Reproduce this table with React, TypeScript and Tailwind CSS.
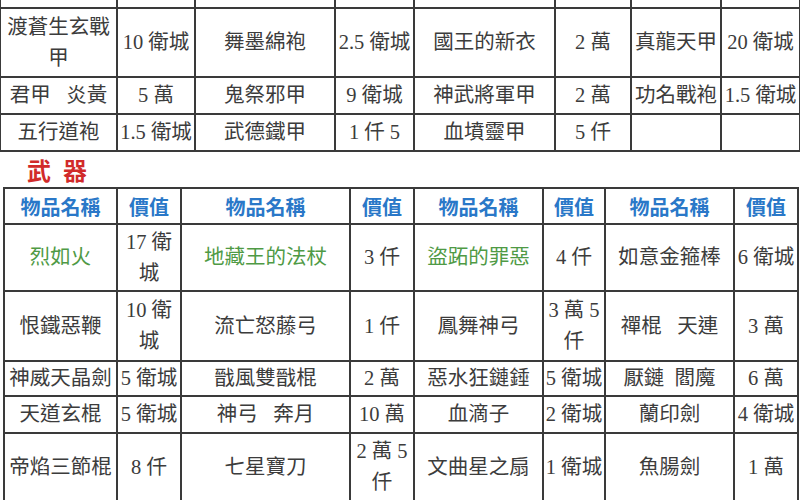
import React from "react";

type Cell = { t: string; g?: boolean };

const armor: string[][] = [
  ["渡蒼生玄戰甲", "10 衛城", "舞墨綿袍", "2.5 衛城", "國王的新衣", "2 萬", "真龍天甲", "20 衛城"],
  ["君甲\u00a0\u00a0\u00a0炎黃", "5 萬", "鬼祭邪甲", "9 衛城", "神武將軍甲", "2 萬", "功名戰袍", "1.5 衛城"],
  ["五行道袍", "1.5 衛城", "武德鐵甲", "1 仟 5", "血墳靈甲", "5 仟", "", ""],
];
const armorH = ["h-[69px]", "h-[37px]", "h-[37px]"];

const weapons: Cell[][] = [
  [{ t: "烈如火", g: true }, { t: "17 衛城" }, { t: "地藏王的法杖", g: true }, { t: "3 仟" }, { t: "盜跖的罪惡", g: true }, { t: "4 仟" }, { t: "如意金箍棒" }, { t: "6 衛城" }],
  [{ t: "恨鐵惡鞭" }, { t: "10 衛城" }, { t: "流亡怒藤弓" }, { t: "1 仟" }, { t: "鳳舞神弓" }, { t: "3 萬 5 仟" }, { t: "禪棍\u00a0\u00a0\u00a0天連" }, { t: "3 萬" }],
  [{ t: "神威天晶劍" }, { t: "5 衛城" }, { t: "戩風雙戩棍" }, { t: "2 萬" }, { t: "惡水狂鏈錘" }, { t: "5 衛城" }, { t: "厭鏈\u00a0\u00a0閻魔" }, { t: "6 萬" }],
  [{ t: "天道玄棍" }, { t: "5 衛城" }, { t: "神弓\u00a0\u00a0\u00a0奔月" }, { t: "10 萬" }, { t: "血滴子" }, { t: "2 衛城" }, { t: "蘭印劍" }, { t: "4 衛城" }],
  [{ t: "帝焰三節棍" }, { t: "8 仟" }, { t: "七星寶刀" }, { t: "2 萬 5 仟" }, { t: "文曲星之扇" }, { t: "1 衛城" }, { t: "魚腸劍" }, { t: "1 萬" }],
];
const weaponH = ["h-[67px]", "h-[70px]", "h-[35px]", "h-[37px]", "h-[68px]"];

const topCols = [117, 78, 140, 79, 141, 76, 90, 79];
const botCols = [113, 64, 169, 64, 129, 62, 129, 64];

const font = { fontFamily: "'Liberation Serif', 'Noto Sans CJK TC', serif" };

export default function App() {
  return (
    <div className="w-[800px] h-[500px] overflow-hidden bg-white text-[#3c3c3c]" style={font}>
      <table className="table-fixed border-collapse w-[800px] -ml-[1px] -mt-[2px] text-[20.5px] leading-[31px]">
        <colgroup>
          {topCols.map((w, i) => (
            <col key={i} style={{ width: w }} />
          ))}
        </colgroup>
        <tbody>
          <tr className="h-[9px]">
            {topCols.map((_, i) => (
              <td key={i} className="border-2 border-[#3a3a3a] p-0"></td>
            ))}
          </tr>
          {armor.map((row, r) => (
            <tr key={r} className={armorH[r]}>
              {row.map((c, i) => (
                <td key={i} className="border-2 border-[#3a3a3a] p-0 text-center align-middle">
                  {c}
                </td>
              ))}
            </tr>
          ))}
        </tbody>
      </table>

      <div className="h-[35px] flex items-center pl-[27px] text-[24px] leading-none font-bold text-[#d12a2a] tracking-[12px]" style={{ fontFamily: "'Noto Sans CJK TC', sans-serif" }}>
        武器
      </div>

      <table className="table-fixed border-collapse w-[794px] ml-[3px] text-[20.5px] leading-[31px]">
        <colgroup>
          {botCols.map((w, i) => (
            <col key={i} style={{ width: w }} />
          ))}
        </colgroup>
        <tbody>
          <tr className="h-[36px]">
            {botCols.map((_, i) => (
              <td
                key={i}
                className="border-2 border-[#3a3a3a] p-0 text-center align-middle font-bold text-[#2a78c8] text-[20px]"
                style={{ fontFamily: "'Noto Sans CJK TC', sans-serif" }}
              >
                {i % 2 === 0 ? "物品名稱" : "價值"}
              </td>
            ))}
          </tr>
          {weapons.map((row, r) => (
            <tr key={r} className={weaponH[r]}>
              {row.map((c, i) => (
                <td
                  key={i}
                  className={
                    "border-2 border-[#3a3a3a] p-0 text-center align-middle " +
                    (c.g ? "text-[#4f9a45]" : "")
                  }
                >
                  {c.t}
                </td>
              ))}
            </tr>
          ))}
        </tbody>
      </table>
    </div>
  );
}
